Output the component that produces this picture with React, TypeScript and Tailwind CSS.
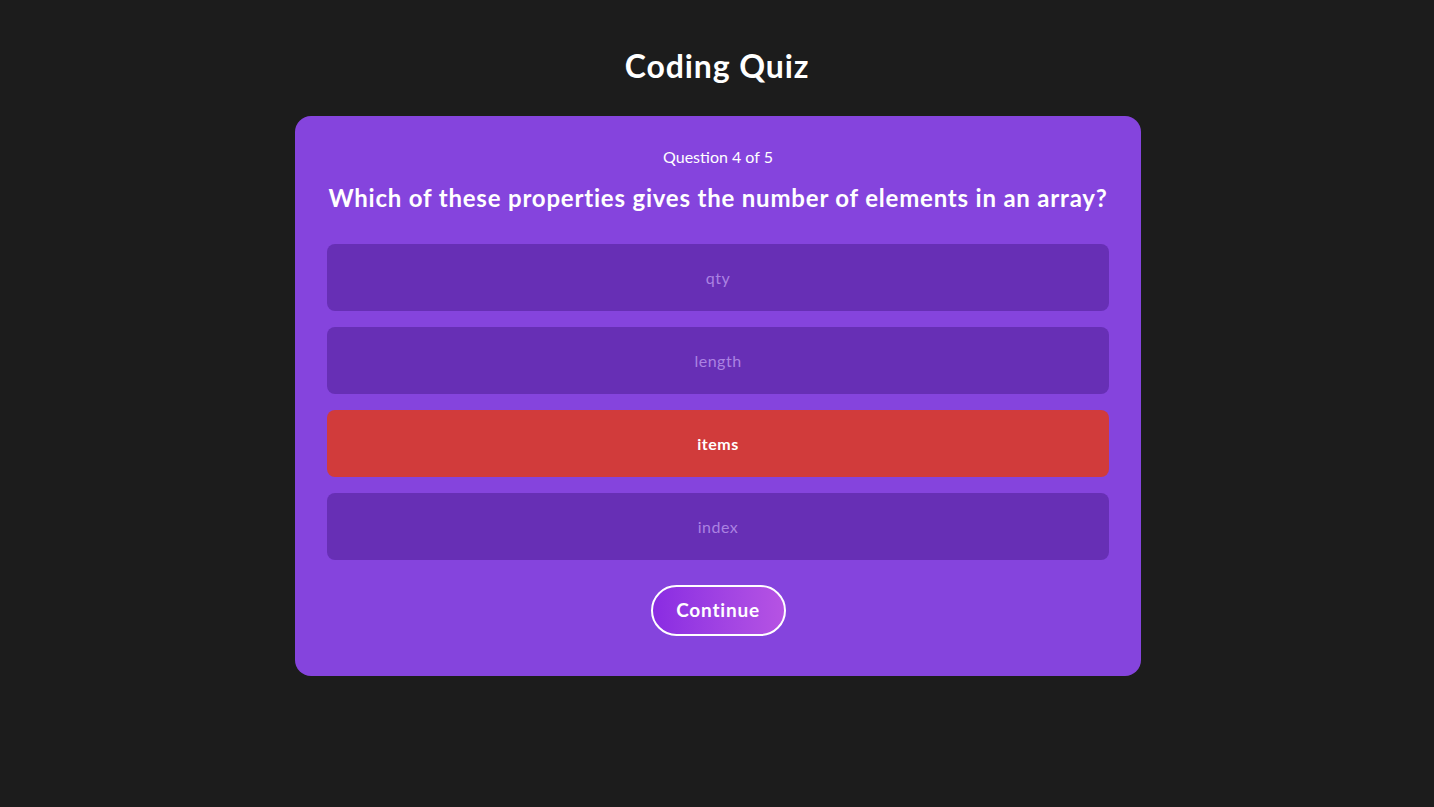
import React, { useState } from 'react'

const options = ['qty', 'length', 'items', 'index']

const App = () => {
  const [selected, setSelected] = useState(2)

  return (
    <div className="min-h-screen bg-[#1c1c1c] pt-[44px] text-white" style={{ fontFamily: 'Lato, "Noto Sans", sans-serif' }}>
      <h1 className="text-center text-[32px] font-bold leading-[44px] tracking-[0.9px]">Coding Quiz</h1>
      <div className="mx-auto mt-[28px] w-[846px] translate-x-[1px] rounded-[16px] bg-[#8544dd] px-[32px] pt-[30px] pb-[40px]">
        <p className="text-center text-[16px] leading-[22px]">Question 4 of 5</p>
        <h2 className="mt-[14px] text-center text-[24px] font-bold leading-[32px] tracking-[0.8px]">
          Which of these properties gives the number of elements in an array?
        </h2>
        <div className="mt-[30px] flex flex-col gap-[16px]">
          {options.map((opt, i) => (
            <button
              key={opt}
              onClick={() => setSelected(i)}
              className={`h-[67px] w-full rounded-[8px] text-[16px] tracking-[0.5px] ${
                selected === i ? 'bg-[#d13b3b] font-bold text-white' : 'bg-[#672fb5] text-[#ab82e2]'
              }`}
            >
              {opt}
            </button>
          ))}
        </div>
        <div className="mt-[25px] flex justify-center">
          <button className="h-[51px] w-[135px] rounded-full border-2 border-white bg-gradient-to-r from-[#8a2be2] to-[#b653e3] text-[19px] font-bold tracking-[0.8px]">
            Continue
          </button>
        </div>
      </div>
    </div>
  )
}

export default App
